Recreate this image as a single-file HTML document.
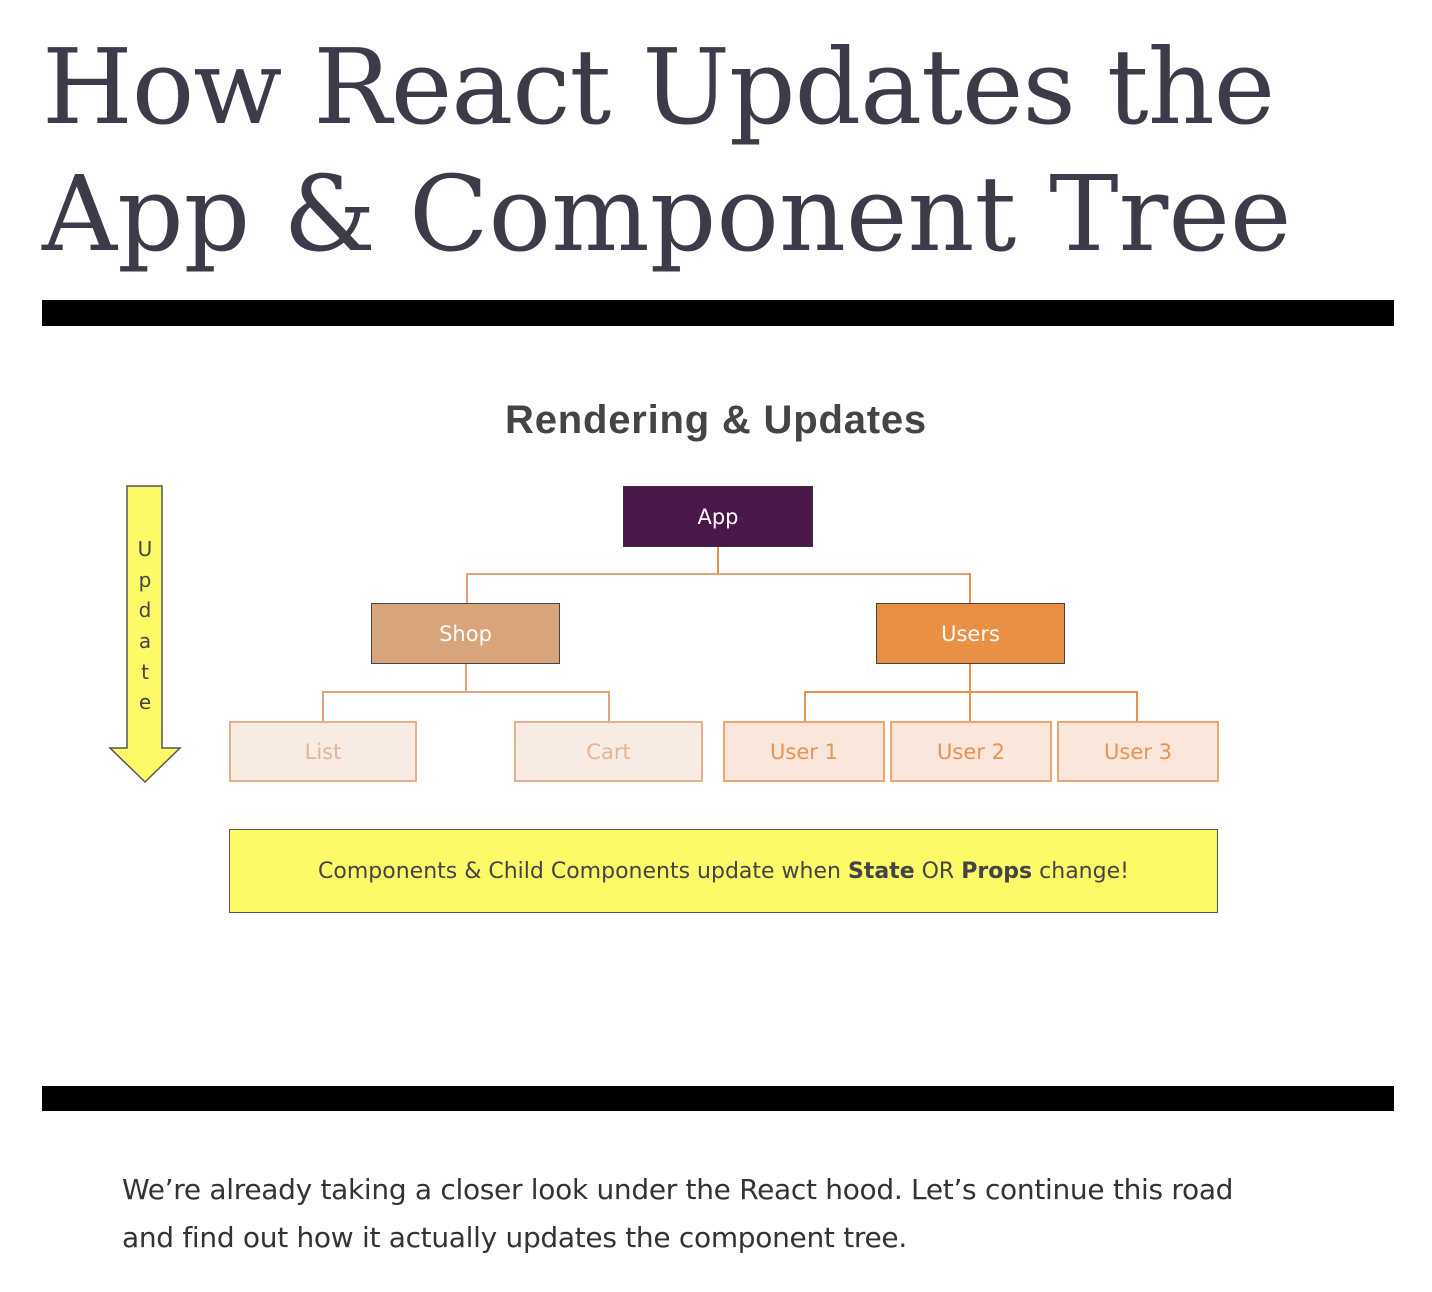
<!DOCTYPE html>
<html><head><meta charset="utf-8"><style>
body{margin:0;background:#fff;width:1432px;height:1292px;position:relative;overflow:hidden}
h1{position:absolute;left:42px;top:24px;margin:0;font-family:"DejaVu Serif","Liberation Serif",serif;font-weight:normal;font-size:104px;line-height:127px;color:#3d3b49;letter-spacing:-1px;white-space:nowrap}
.l2{letter-spacing:0px}
.bar{position:absolute;left:42px;width:1352px;background:#000}
.slide{position:absolute;left:42px;top:326px;width:1352px;height:760px;background:#fff}
.t{position:absolute;left:0;width:1432px;top:398px;text-align:center;font-family:"Liberation Sans",sans-serif;font-weight:bold;font-size:40px;color:#444;letter-spacing:0.8px}
.b{position:absolute;box-sizing:border-box;display:flex;align-items:center;justify-content:center;font-family:"DejaVu Sans","Liberation Sans",sans-serif;font-size:21px}
.l{position:absolute;background:#e3a278}
p{position:absolute;left:122px;top:1166px;margin:0;width:1170px;font-family:"DejaVu Sans","Liberation Sans",sans-serif;font-size:28px;line-height:48px;color:#333;letter-spacing:-0.3px}
</style></head><body>
<h1>How React Updates the<br><span class="l2">App &amp; Component Tree</span></h1>
<div class="bar" style="top:300px;height:26px"></div>
<div class="slide"></div>
<div class="bar" style="top:1086px;height:25px"></div>
<div class="t">Rendering &amp; Updates</div>
<svg style="position:absolute;left:0;top:0" width="1432" height="1292">
<polygon points="127,486 162,486 162,748 180,748 145,782 110,748 127,748" fill="#fdfa68" stroke="#555" stroke-width="1.5"/>
<g font-family="DejaVu Sans,sans-serif" font-size="20" fill="#444" text-anchor="middle">
<text x="145" y="556">U</text><text x="145" y="587">p</text><text x="145" y="617">d</text><text x="145" y="648">a</text><text x="145" y="679">t</text><text x="145" y="709">e</text></g>
</svg>
<div class="l" style="left:717px;top:547px;width:2px;height:28px;background:#e8914a"></div>
<div class="l" style="left:466px;top:573px;width:505px;height:2px"></div>
<div class="l" style="left:466px;top:573px;width:2px;height:30px"></div>
<div class="l" style="left:969px;top:573px;width:2px;height:30px;background:#e8914a"></div>
<div class="l" style="left:465px;top:664px;width:2px;height:29px"></div>
<div class="l" style="left:322px;top:691px;width:288px;height:2px"></div>
<div class="l" style="left:322px;top:691px;width:2px;height:30px"></div>
<div class="l" style="left:608px;top:691px;width:2px;height:30px"></div>
<div class="l" style="left:969px;top:664px;width:2px;height:57px;background:#e8914a"></div>
<div class="l" style="left:804px;top:691px;width:334px;height:2px;background:#e8914a"></div>
<div class="l" style="left:804px;top:691px;width:2px;height:30px;background:#e8914a"></div>
<div class="l" style="left:1136px;top:691px;width:2px;height:30px;background:#e8914a"></div>
<div class="b" style="left:623px;top:486px;width:190px;height:61px;background:#4b174a;border:1px solid #333;color:#fff">App</div>
<div class="b" style="left:371px;top:603px;width:189px;height:61px;background:#d8a47c;border:1.5px solid #444;color:#fff">Shop</div>
<div class="b" style="left:876px;top:603px;width:189px;height:61px;background:#ea9044;border:1.5px solid #444;color:#fff">Users</div>
<div class="b" style="left:229px;top:721px;width:188px;height:61px;background:#f8ebe3;border:2px solid #e5b08e;color:#e4b495">List</div>
<div class="b" style="left:514px;top:721px;width:189px;height:61px;background:#f8ebe3;border:2px solid #e5b08e;color:#e4b495">Cart</div>
<div class="b" style="left:723px;top:721px;width:162px;height:61px;background:#fae6da;border:2px solid #eca671;color:#e69553">User 1</div>
<div class="b" style="left:890px;top:721px;width:162px;height:61px;background:#fae6da;border:2px solid #eca671;color:#e69553">User 2</div>
<div class="b" style="left:1057px;top:721px;width:162px;height:61px;background:#fae6da;border:2px solid #eca671;color:#e69553">User 3</div>
<div class="b" style="left:229px;top:829px;width:989px;height:84px;background:#fdfa68;border:1.5px solid #555;color:#444;font-size:22px;letter-spacing:0px">Components &amp; Child Components update when&nbsp;<b>State</b>&nbsp;OR&nbsp;<b>Props</b>&nbsp;change!</div>
<p>We’re already taking a closer look under the React hood. Let’s continue this road and find out how it actually updates the component tree.</p>
</body></html>
